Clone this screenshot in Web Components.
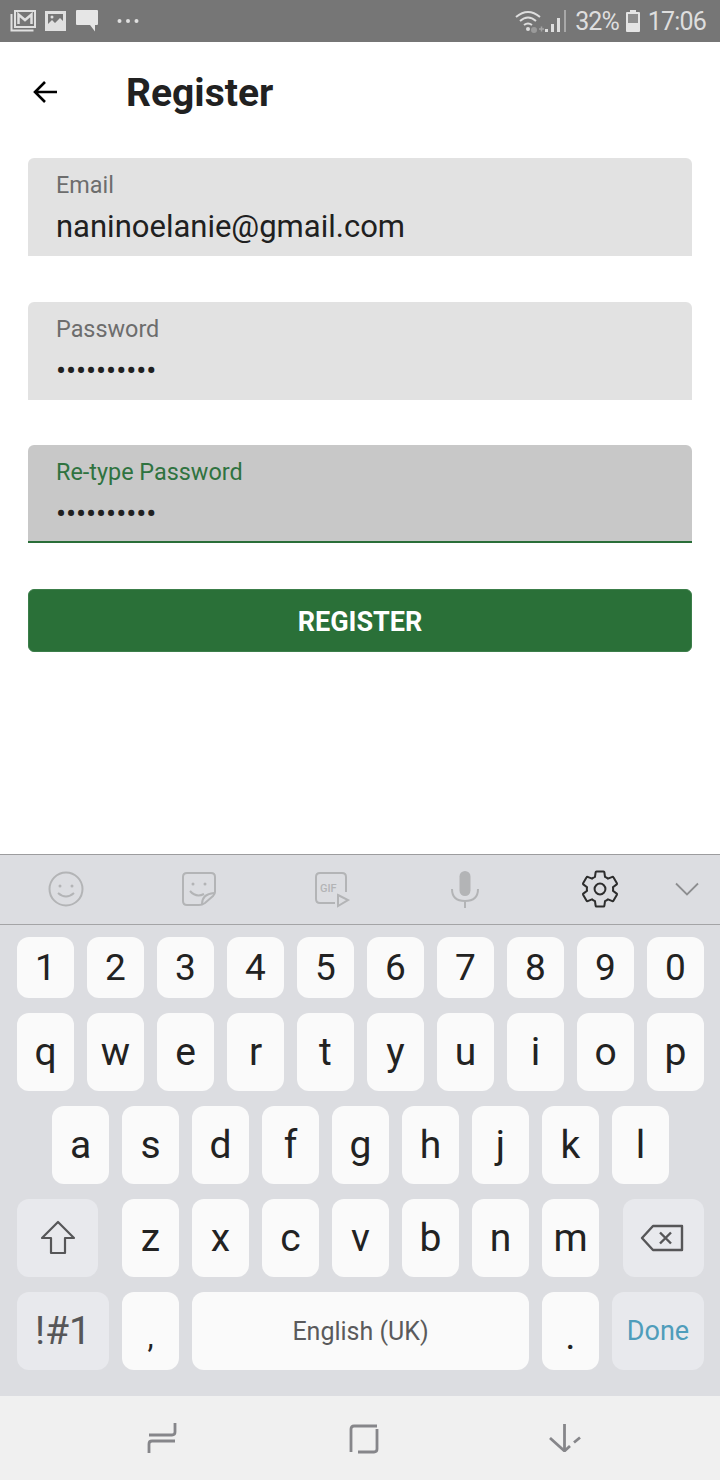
<!DOCTYPE html>
<html lang="en">
<head>
<meta charset="utf-8">
<title>Register</title>
<style>
	html, body { margin: 0; padding: 0; background: #fff; }
	body { font-family: Roboto, "Liberation Sans", sans-serif; }
</style>
</head>
<body>
<register-screen></register-screen>

<script>
class StatusBar extends HTMLElement {
	constructor() {
		super();
		this.attachShadow({ mode: "open" });
		this.shadowRoot.innerHTML = `
			<style>
				:host {
					display: flex;
					align-items: center;
					height: 42px;
					background: #767676;
					color: #dedede;
					font-size: 25px;
					padding: 0 14px 0 10px;
					box-sizing: border-box;
				}
				svg { display: block; flex: none; }
				.gap { flex: 1; }
				.pct { margin-left: 8px; letter-spacing: -1px; }
				.time { margin-left: 8px; letter-spacing: -0.800px; }
			</style>
			<svg width="26" height="22" viewBox="0 0 26 22" fill="none" stroke="#e0e0e0">
				<path d="M1.5 4v16.5h22" stroke-width="2"/>
				<rect x="5" y="1" width="20" height="16" fill="#767676" stroke-width="2"/>
				<path d="M8.5 14V4.5L15 10l6.5-5.500V14" stroke-width="2.500"/>
			</svg>
			<svg style="margin-left:9px" width="21" height="20" viewBox="0 0 21 20">
				<path fill="#e0e0e0" fill-rule="evenodd" d="M0 0h21v20H0z M3 3v10l4-4 3 3 5-5 3 3V3z"/>
				<circle cx="7" cy="6" r="1.500" fill="#e0e0e0"/>
			</svg>
			<svg style="margin-left:10px" width="22" height="22" viewBox="0 0 22 22">
				<path fill="#e6e6e6" d="M0 1q0-1 1-1h20q1 0 1 1v13q0 1-1 1h-2v6.500L14 15H1q-1 0-1-1z"/>
			</svg>
			<svg style="margin-left:19px" width="22" height="6" viewBox="0 0 22 6" fill="#e0e0e0">
				<circle cx="2.500" cy="3" r="2"/><circle cx="11" cy="3" r="2"/><circle cx="19.500" cy="3" r="2"/>
			</svg>
			<span class="gap"></span>
			<svg width="30" height="24" viewBox="0 0 30 24" fill="none" stroke="#dedede" stroke-width="2">
				<path d="M1 8q12-10 24 0"/>
				<path d="M5 12q8-7 16 0"/>
				<path d="M9 16q4-3 8 0"/>
				<circle cx="13" cy="20" r="2" fill="#dedede" stroke="none"/>
				<circle cx="19" cy="21" r="3" fill="#9a9a9a" stroke="none"/>
				<path d="M24 20h5M26.500 17.500v5" stroke="#a4a4a4" stroke-width="1.500"/>
			</svg>
			<svg width="22" height="24" viewBox="0 0 22 24" fill="#dedede">
				<rect x="0" y="20" width="3" height="3"/>
				<rect x="6" y="15" width="3" height="8"/>
				<rect x="12" y="9" width="3" height="14"/>
				<rect x="19" y="1" width="2" height="22" fill="#a8a8a8"/>
			</svg>
			<span class="pct">32%</span>
			<svg style="margin-left:7px" width="14" height="22" viewBox="0 0 14 22">
				<path fill="#e4e4e4" fill-rule="evenodd" d="M4 0h6v2h3q1 0 1 1v18q0 1-1 1H1q-1 0-1-1V3q0-1 1-1h3z M2 4v9h10V4z"/>
				<rect x="2" y="4" width="10" height="9" fill="#8e8e8e"/>
			</svg>
			<span class="time">17:06</span>
		`;
	}
}

class AppHeader extends HTMLElement {
	constructor() {
		super();
		this.attachShadow({ mode: "open" });
		this.shadowRoot.innerHTML = `
			<style>
				:host {
					display: flex;
					align-items: center;
					height: 93px;
					padding: 7px 0 0 33px;
					box-sizing: border-box;
					flex: none;
				}
				svg { display: block; flex: none; }
				h1 {
					margin: 2px 0 0 68px;
					font-size: 39px;
					font-weight: 700;
					color: #212121;
					line-height: 44px;
				}
			</style>
			<svg width="25" height="24" viewBox="0 0 25 24" fill="none" stroke="#000" stroke-width="2.600">
				<path d="M24 12H3M12 2L2 12l10 10"/>
			</svg>
			<h1><slot></slot></h1>
		`;
	}
}

class TextField extends HTMLElement {
	constructor() {
		super();
		this.attachShadow({ mode: "open" });
		this.shadowRoot.innerHTML = `
			<style>
				:host {
					display: flex;
					flex-direction: column;
					height: 98px;
					padding: 14px 28px 0;
					box-sizing: border-box;
					background: #e2e2e2;
					border-radius: 6px 6px 0 0;
					color: #202020;
				}
				:host([focused]) {
					background: #c8c8c8;
					border-bottom: 2px solid #2a6e38;
				}
				.label {
					font-size: 23.400px;
					line-height: 26px;
					color: #6d6d6d;
				}
				:host([focused]) .label { color: #2f7340; }
				.value {
					margin-top: 12px;
					font-size: 31px;
					line-height: 34px;
				}
				:host([secret]) .value {
					margin-top: 12px;
					font-size: 30px;
					letter-spacing: -0.100px;
				}
			</style>
			<div class="label"></div>
			<div class="value"><slot></slot></div>
		`;
		this.shadowRoot.querySelector(".label").textContent = this.getAttribute("label");
	}
}

class RegisterButton extends HTMLElement {
	constructor() {
		super();
		this.attachShadow({ mode: "open" });
		this.shadowRoot.innerHTML = `
			<style>
				:host {
					display: flex;
					align-items: center;
					justify-content: center;
					height: 63px;
					padding-top: 2px;
					background: #2a7038;
					border: 1px solid #3c7e4a;
					border-radius: 6px;
					box-sizing: border-box;
					color: #fff;
					font-size: 27px;
					font-weight: 700;
				}
			</style>
			<slot></slot>
		`;
	}
}

class KbToolbar extends HTMLElement {
	constructor() {
		super();
		this.attachShadow({ mode: "open" });
		this.shadowRoot.innerHTML = `
			<style>
				:host {
					display: grid;
					grid-template-columns: 132.500px 133px 133px 133px 137px 37px 1fr;
					height: 71px;
					padding-bottom: 2px;
					box-sizing: border-box;
					border-top: 1px solid #9c9c9e;
					border-bottom: 1px solid #a4a4a6;
					align-items: center;
					justify-items: center;
				}
				svg { display: block; }
			</style>
			<svg width="38" height="38" viewBox="0 0 38 38" fill="none" stroke="#b3b4b6" stroke-width="2">
				<circle cx="19" cy="19" r="16.500"/>
				<circle cx="13" cy="16" r="1.500" fill="#b3b4b6" stroke="none"/>
				<circle cx="25" cy="16" r="1.500" fill="#b3b4b6" stroke="none"/>
				<path d="M11 23q8 7 16 0"/>
			</svg>
			<svg width="38" height="38" viewBox="0 0 38 38" fill="none" stroke="#b3b4b6" stroke-width="2">
				<path d="M19 35H7q-4 0-4-4V7q0-4 4-4h24q4 0 4 4v15q0 2-2 4l-8 7q-3 2-6 2z"/>
				<path d="M22 34q0-10 12-11"/>
				<circle cx="13" cy="14" r="1.500" fill="#b3b4b6" stroke="none"/>
				<circle cx="25" cy="14" r="1.500" fill="#b3b4b6" stroke="none"/>
				<path d="M10 21q6 7 14 3"/>
			</svg>
			<svg width="38" height="38" viewBox="0 0 38 38" fill="none" stroke="#b3b4b6" stroke-width="2">
				<path d="M22 33H7q-4 0-4-4V7q0-4 4-4h22q4 0 4 4v15"/>
				<path d="M25 25l10 5-10 6z"/>
				<text x="7" y="22" font-family="Roboto" font-size="11" font-weight="500" fill="#b3b4b6" stroke="none">GIF</text>
			</svg>
			<svg width="30" height="38" viewBox="0 0 30 38" fill="none" stroke="#b3b4b6" stroke-width="2">
				<rect x="9.500" y="1" width="11" height="25" rx="5.500" fill="#b3b4b6" stroke="none"/>
				<path d="M2 19q0 12 13 12t13-12M15 31v7"/>
			</svg>
			<svg width="42" height="42" viewBox="0 0 24 24" fill="none" stroke="#2d2d2d" stroke-width="1.150">
				<path d="M19.430 12.980c.04-.32.07-.64.07-.98 0-.34-.03-.66-.07-.98l2.110-1.650c.19-.15.24-.42.12-.64l-2-3.460c-.12-.22-.39-.3-.61-.22l-2.490 1c-.52-.4-1.080-.73-1.690-.98l-.38-2.650C14.460 2.180 14.250 2 14 2h-4c-.25 0-.46.18-.49.42l-.38 2.650c-.61.25-1.170.59-1.690.98l-2.490-1c-.23-.09-.49 0-.61.22l-2 3.460c-.13.22-.07.49.12.64l2.110 1.650c-.04.32-.07.65-.07.98 0 .33.03.66.07.98l-2.110 1.650c-.19.15-.24.42-.12.64l2 3.460c.12.22.39.3.61.22l2.490-1c.52.4 1.080.73 1.690.98l.38 2.650c.03.24.24.42.49.42h4c.25 0 .46-.18.49-.42l.38-2.650c.61-.25 1.170-.59 1.690-.98l2.490 1c.23.09.49 0 .61-.22l2-3.460c.12-.22.07-.49-.12-.64l-2.110-1.650z"/>
				<circle cx="12" cy="12" r="3.100"/>
			</svg>
			<svg width="24" height="14" viewBox="0 0 24 14" fill="none" stroke="#8d8e90" stroke-width="1.800">
				<path d="M1 1.500l11 11 11-11"/>
			</svg>
		`;
	}
}

class KbKey extends HTMLElement {
	constructor() {
		super();
		this.attachShadow({ mode: "open" });
		this.shadowRoot.innerHTML = `
			<style>
				:host {
					display: flex;
					align-items: center;
					justify-content: center;
					flex: none;
					width: 57px;
					height: 78px;
					border-radius: 12px;
					background: #fafafa;
					color: #222;
					font-size: 39px;
					box-sizing: border-box;
				}
				:host([fn]) { background: #e8e9ed; color: #565658; }
				:host([num]) { height: 61px; font-size: 37px; }
			</style>
			<slot></slot>
		`;
	}
}

class KbRow extends HTMLElement {
	constructor() {
		super();
		this.attachShadow({ mode: "open" });
		this.shadowRoot.innerHTML = `
			<style>
				:host {
					display: flex;
					justify-content: center;
					gap: 13px;
				}
			</style>
			<slot></slot>
		`;
	}
}

class SoftKeyboard extends HTMLElement {
	constructor() {
		super();
		this.attachShadow({ mode: "open" });
		const row = (keys, attr) =>
			[...keys].map((k) => `<kb-key ${attr || ""}>${k}</kb-key>`).join("");
		this.shadowRoot.innerHTML = `
			<style>
				:host {
					display: flex;
					flex-direction: column;
					height: 542px;
					flex: none;
					background: #dcdde1;
					box-sizing: border-box;
				}
				.rows {
					display: flex;
					flex-direction: column;
					gap: 15px;
					padding: 12px 16px 0 17px;
				}
				svg { display: block; }
				.low { padding-top: 10px; line-height: 1; }
				.comma { font-size: 31px; padding-top: 10px; }
				.split { justify-content: flex-start; }
			</style>
			<kb-toolbar></kb-toolbar>
			<div class="rows">
				<kb-row>${row("1234567890", "num")}</kb-row>
				<kb-row>${row("qwertyuiop")}</kb-row>
				<kb-row>${row("asdfghjkl")}</kb-row>
				<kb-row class="split">
					<kb-key fn style="width:81px;margin-right:11px">
						<svg width="36" height="36" viewBox="0 0 36 36" fill="none" stroke="#565658" stroke-width="2.200" stroke-linejoin="round">
							<path d="M18 2L2 18h9v15h14V18h9z"/>
						</svg>
					</kb-key>
					${row("zxcvbnm")}
					<kb-key fn style="width:81px;margin-left:11px">
						<svg style="margin-right:3px" width="44" height="28" viewBox="0 0 44 28" fill="none" stroke="#565658" stroke-width="2.400" stroke-linejoin="round">
							<path d="M42 2H13L2 14l11 12h29z"/>
							<path d="M20 8.500l11 11M31 8.500l-11 11"/>
						</svg>
					</kb-key>
				</kb-row>
				<kb-row class="split">
					<kb-key fn style="width:92px;">!#1</kb-key>
					<kb-key><span class="low comma">,</span></kb-key>
					<kb-key style="width:337px;font-size:25px;color:#5a5a5c">English (UK)</kb-key>
					<kb-key><span class="low">.</span></kb-key>
					<kb-key fn style="width:92px;font-size:27px;color:#4f9dbb">Done</kb-key>
				</kb-row>
			</div>
		`;
	}
}

class NavBar extends HTMLElement {
	constructor() {
		super();
		this.attachShadow({ mode: "open" });
		this.shadowRoot.innerHTML = `
			<style>
				:host {
					display: grid;
					grid-template-columns: 325px 70px 1fr;
					height: 84px;
					flex: none;
					background: #f0f0f0;
					align-items: center;
					justify-items: center;
				}
				svg { display: block; }
				.recent { justify-self: end; margin-right: 148px; }
				.home { margin: 2px 0 0 7px; }
				.back { justify-self: start; margin-left: 154px; }
			</style>
			<svg class="recent" width="30" height="32" viewBox="0 0 30 32" fill="none" stroke="#86868a" stroke-width="2.800">
				<path d="M28 1v9q0 3-3 3H2"/>
				<path d="M2 31v-9q0-3 3-3h23"/>
			</svg>
			<svg class="home" width="30" height="30" viewBox="0 0 30 30" fill="none" stroke="#86868a" stroke-width="2.800">
				<path d="M28 2H5Q2 2 2 5v23"/>
				<path d="M28 5v20q0 3-3 3H9"/>
			</svg>
			<svg class="back" width="32" height="28" viewBox="0 0 32 28" fill="none" stroke="#86868a" stroke-width="2.800">
				<path d="M15.500 0v26"/>
				<path d="M1 14l14.500 13L21 22M25 18.500l6-5"/>
			</svg>
		`;
	}
}

class RegisterScreen extends HTMLElement {
	constructor() {
		super();
		this.attachShadow({ mode: "open" });
		this.shadowRoot.innerHTML = `
			<style>
				:host {
					display: flex;
					flex-direction: column;
					width: 720px;
					height: 1480px;
					overflow: hidden;
					background: #fff;
				}
				main {
					flex: 1;
					display: flex;
					flex-direction: column;
					gap: 46px;
					padding: 23px 28px 0;
				}
			</style>
			<status-bar></status-bar>
			<app-header>Register</app-header>
			<main>
				<text-field label="Email">naninoelanie@gmail.com</text-field>
				<text-field label="Password" secret>••••••••••</text-field>
				<text-field label="Re-type Password" secret focused style="margin-top:-1px">••••••••••</text-field>
				<register-button>REGISTER</register-button>
			</main>
			<soft-keyboard></soft-keyboard>
			<nav-bar></nav-bar>
		`;
	}
}

customElements.define("status-bar", StatusBar);
customElements.define("app-header", AppHeader);
customElements.define("text-field", TextField);
customElements.define("register-button", RegisterButton);
customElements.define("kb-toolbar", KbToolbar);
customElements.define("kb-key", KbKey);
customElements.define("kb-row", KbRow);
customElements.define("soft-keyboard", SoftKeyboard);
customElements.define("nav-bar", NavBar);
customElements.define("register-screen", RegisterScreen);
</script>
</body>
</html>
